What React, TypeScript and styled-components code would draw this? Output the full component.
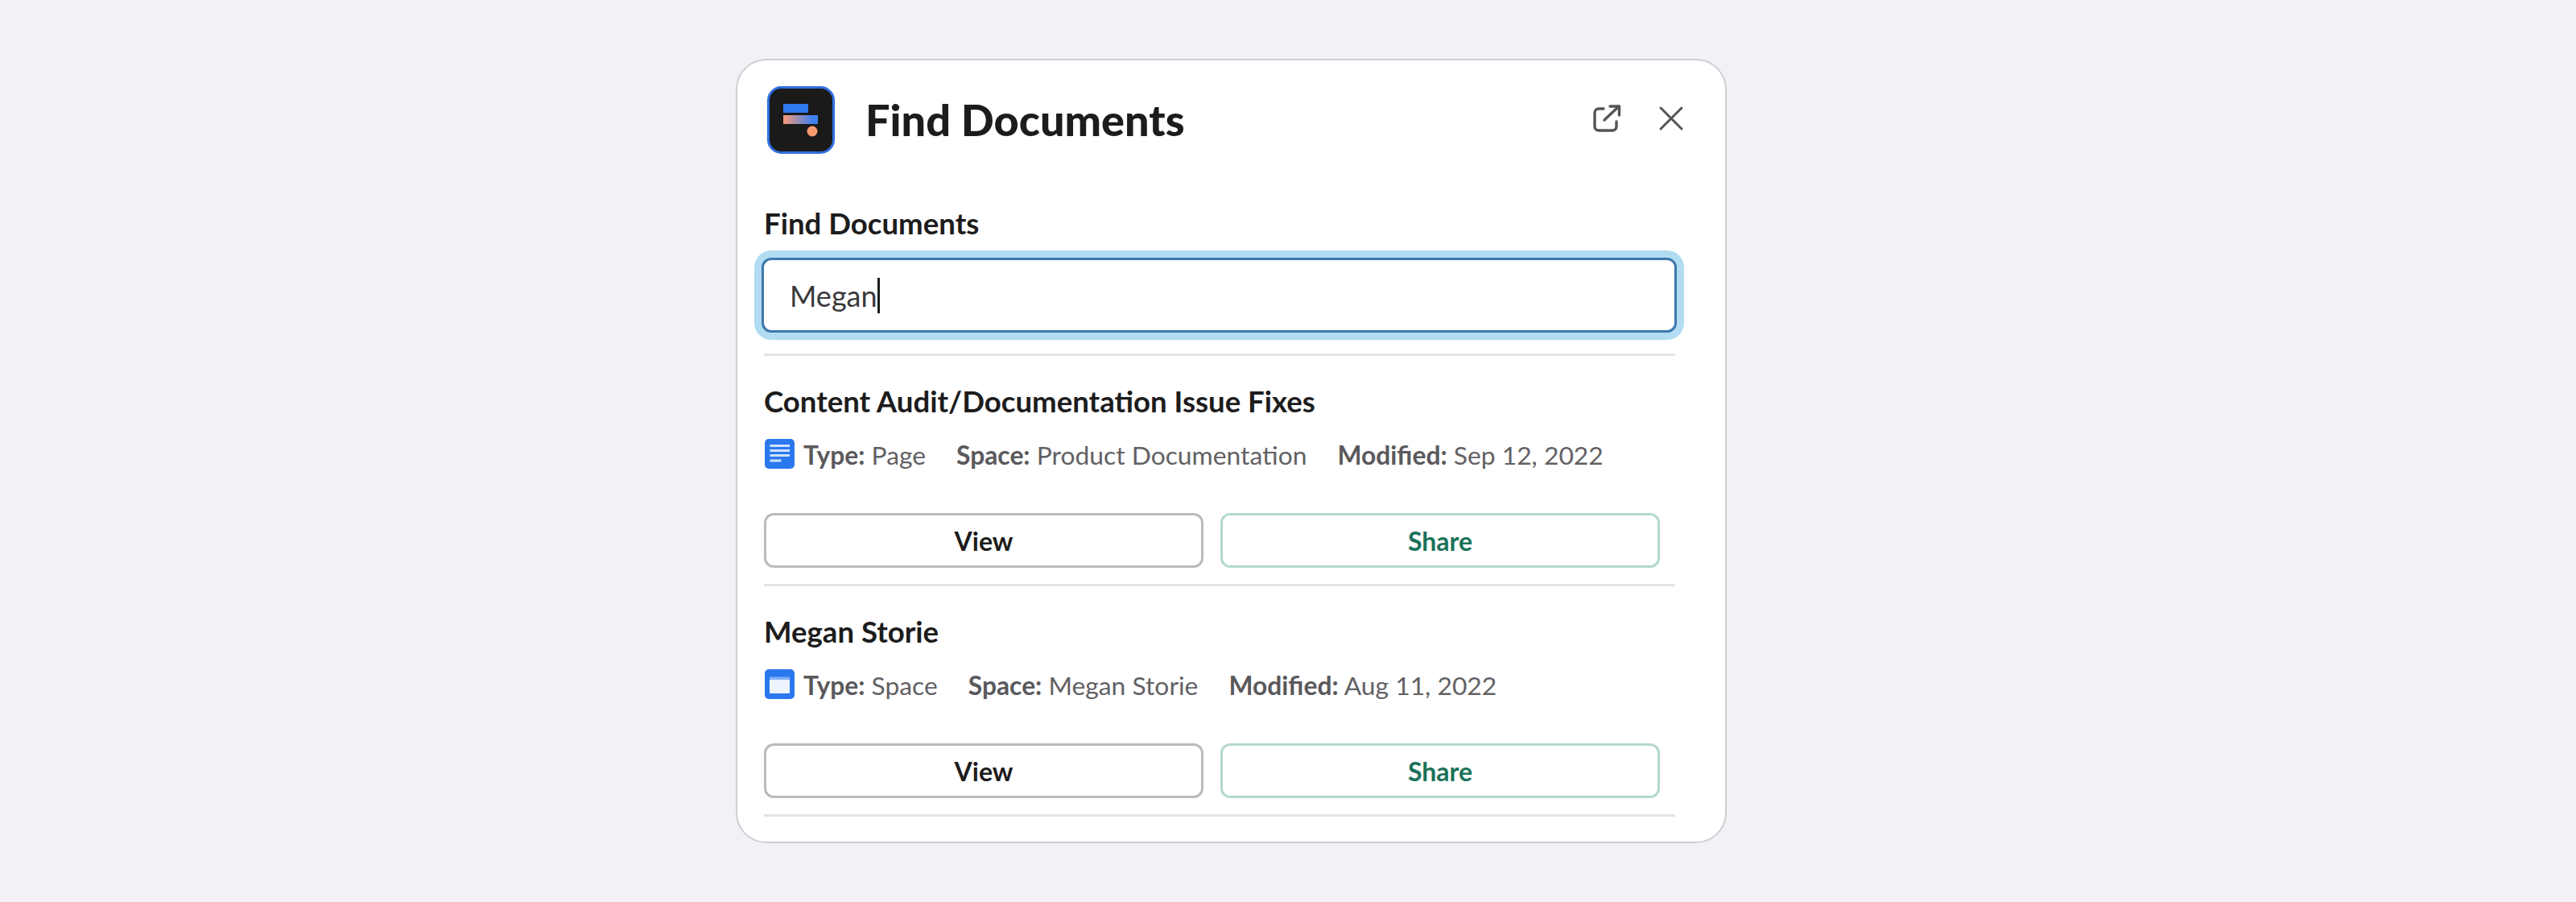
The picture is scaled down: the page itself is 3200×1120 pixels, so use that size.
import React from "react";
import styled, { createGlobalStyle } from "styled-components";

type DocType = "Page" | "Space";

type DocItem = {
  title: string;
  type: DocType;
  space: string;
  modified: string;
};

const items: DocItem[] = [
  {
    title: "Content Audit/Documentation Issue Fixes",
    type: "Page",
    space: "Product Documentation",
    modified: "Sep 12, 2022",
  },
  {
    title: "Megan Storie",
    type: "Space",
    space: "Megan Storie",
    modified: "Aug 11, 2022",
  },
];

const GlobalStyle = createGlobalStyle`
  html, body {
    margin: 0;
    padding: 0;
    background: #f3f0f6;
  }
  body {
    font-family: Lato, "Open Sans", sans-serif;
    font-variant-ligatures: common-ligatures;
  }
`;

const Page = styled.div`
  box-sizing: border-box;
  width: 3200px;
  height: 1120px;
  padding: 73px 0 0 914px;
  background: #f3f0f6;
`;

const Card = styled.div`
  box-sizing: border-box;
  width: 1231px;
  height: 974px;
  padding: 32px 62px 0 33px;
  background: #fff;
  border: 2px solid #d0ced4;
  border-radius: 38px;
`;

const Header = styled.div`
  display: flex;
  align-items: center;
  height: 84px;
`;

const Logo = styled.svg`
  display: block;
  width: 84px;
  height: 84px;
  margin-left: 4px;
  flex: none;
`;

const HeaderTitle = styled.h1`
  margin: 0 0 0 38px;
  font-size: 54px;
  font-weight: 900;
  line-height: 64px;
  color: #1d1c1d;
`;

const Actions = styled.div`
  display: flex;
  align-items: center;
  gap: 46px;
  margin: 0 -11px 4px auto;
`;

const ActionIcon = styled.svg<{ $size: number }>`
  display: block;
  width: ${(p) => p.$size}px;
  height: ${(p) => p.$size}px;
  fill: none;
  stroke: #555456;
  stroke-linecap: round;
  stroke-linejoin: round;
`;

const FieldLabel = styled.label`
  display: block;
  margin-top: 66px;
  font-size: 36.6px;
  font-weight: 700;
  line-height: 40px;
  color: #1d1c1d;
`;

const SearchBox = styled.div`
  box-sizing: border-box;
  display: flex;
  align-items: center;
  height: 93px;
  margin: 23px -2px 26px -3px;
  padding-left: 32px;
  background: #fff;
  border: 3px solid #3f78ad;
  border-radius: 12px;
  box-shadow: 0 0 0 9px #b1dcf1;
  font-size: 36px;
  line-height: 44px;
  color: #3a393b;
`;

const Caret = styled.span`
  display: block;
  width: 3px;
  height: 44px;
  background: #1d1c1d;
`;

const Divider = styled.div`
  height: 3px;
  background: #e3e3e4;
`;

const Item = styled.div`
  padding-top: 36px;
`;

const ItemTitle = styled.div`
  font-size: 36.6px;
  font-weight: 700;
  line-height: 40px;
  color: #1d1c1d;
`;

const MetaRow = styled.div`
  display: flex;
  align-items: center;
  height: 37px;
  margin-top: 27px;
  font-size: 31.8px;
  color: #626164;
`;

const TypeIcon = styled.svg`
  display: block;
  width: 37px;
  height: 37px;
  margin-left: 1px;
  margin-right: 11px;
  flex: none;
`;

const MetaEntry = styled.span`
  margin: 2px 38px 0 0;
  white-space: pre;
`;

const MetaKey = styled.b`
  font-weight: 700;
  color: #5a595c;
`;

const ButtonRow = styled.div`
  display: flex;
  gap: 21px;
  margin: 55px 19px 20px 0;
`;

const Button = styled.button<{ $variant: "plain" | "share" }>`
  box-sizing: border-box;
  flex: 1;
  height: 68px;
  padding: 0;
  background: #fff;
  border: 3px solid ${(p) => (p.$variant === "share" ? "#b4d8cf" : "#bbbbbc")};
  border-radius: 12px;
  font-family: inherit;
  font-size: 32px;
  font-weight: 700;
  color: ${(p) => (p.$variant === "share" ? "#1b7259" : "#1d1c1d")};
`;

const AppLogo = () => (
  <Logo viewBox="0 0 84 84">
    <defs>
      <linearGradient id="logo-bar" x1="0" x2="1" y1="0" y2="0">
        <stop offset="0" stopColor="#f79a76" />
        <stop offset="0.85" stopColor="#3f80ee" />
      </linearGradient>
    </defs>
    <rect x="1.5" y="1.5" width="81" height="81" rx="16" fill="#1a1a1b" stroke="#2f6fe0" strokeWidth="3" />
    <rect x="20" y="22" width="31" height="11" fill="#3179f0" />
    <rect x="20" y="36" width="43" height="11" fill="url(#logo-bar)" />
    <circle cx="56" cy="56" r="6.5" fill="#f79a6e" />
  </Logo>
);

const PageIcon = () => (
  <TypeIcon viewBox="0 0 37 37">
    <rect width="37" height="37" rx="5" fill="#2b78ee" />
    <g fill="#cfe0fb">
      <rect x="6.5" y="7" width="24.5" height="3" />
      <rect x="6.5" y="13" width="24.5" height="3" />
      <rect x="6.5" y="19" width="24.5" height="3" />
      <rect x="6.5" y="25.5" width="14" height="3" />
    </g>
  </TypeIcon>
);

const SpaceIcon = () => (
  <TypeIcon viewBox="0 0 37 37">
    <rect width="37" height="37" rx="5" fill="#2b78ee" />
    <rect x="6" y="9.5" width="25" height="3.5" fill="#7fb0f7" />
    <rect x="6" y="13" width="25" height="17" rx="1" fill="#eef4fe" />
  </TypeIcon>
);

const App: React.FC = () => {
  return (
    <Page>
      <GlobalStyle />
      <Card>
        <Header>
          <AppLogo />
          <HeaderTitle>Find Documents</HeaderTitle>
          <Actions>
            <ActionIcon $size={36} viewBox="0 0 36 36" strokeWidth="3.4">
              <path d="M14 6H8a5 5 0 0 0-5 5v17a5 5 0 0 0 5 5h17a5 5 0 0 0 5-5v-6" />
              <path d="M15 20L33 3" />
              <path d="M22 3h11.5v11" />
            </ActionIcon>
            <ActionIcon $size={32} viewBox="0 0 32 32" strokeWidth="3">
              <path d="M3 3l26 26M29 3L3 29" />
            </ActionIcon>
          </Actions>
        </Header>
        <FieldLabel>Find Documents</FieldLabel>
        <SearchBox>
          Megan
          <Caret />
        </SearchBox>
        <Divider />
        {items.map((item) => (
          <Item key={item.title}>
            <ItemTitle>{item.title}</ItemTitle>
            <MetaRow>
              {item.type === "Page" ? <PageIcon /> : <SpaceIcon />}
              <MetaEntry>
                <MetaKey>Type:</MetaKey> {item.type}
              </MetaEntry>
              <MetaEntry>
                <MetaKey>Space:</MetaKey> {item.space}
              </MetaEntry>
              <MetaEntry>
                <MetaKey>Modified:</MetaKey> {item.modified}
              </MetaEntry>
            </MetaRow>
            <ButtonRow>
              <Button $variant="plain">View</Button>
              <Button $variant="share">Share</Button>
            </ButtonRow>
            <Divider />
          </Item>
        ))}
      </Card>
    </Page>
  );
};

export default App;
